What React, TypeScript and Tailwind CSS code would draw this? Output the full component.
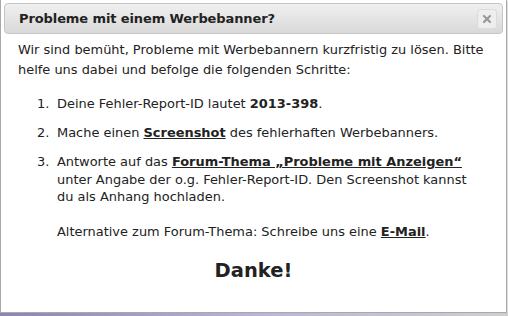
import { X } from 'lucide-react'

const font = { fontFamily: '"DejaVu Sans", Verdana, sans-serif' }

export default function App() {
  return (
    <div className="h-[316px] w-[508px] overflow-hidden bg-white" style={font}>
      <div className="flex h-[313px] w-[507px] flex-col border-b border-l border-r border-[#a9a9a9] bg-white px-[3px] pt-[3px] shadow-[1px_1px_2px_rgba(0,0,0,0.2)]">
        <div className="flex h-[31px] items-center justify-between rounded-[4px] border border-[#c5c5c5] bg-gradient-to-b from-[#f0f0f0] to-[#d9d9d9] pl-[14px] pr-[5px]">
          <span className="text-[13px] font-bold tracking-[-0.1px] text-[#222]">
            Probleme mit einem Werbebanner?
          </span>
          <button className="flex h-[20px] w-[20px] items-center justify-center rounded-[3px] border border-[#dcdcdc] bg-[#eeeeee]">
            <X size={12} strokeWidth={4.5} className="text-[#9a9a9a]" />
          </button>
        </div>

        <div className="whitespace-nowrap px-[14px] pt-[6px] text-[12.95px] text-[#222]">
          <p className="leading-[20px]">
            Wir sind bemüht, Probleme mit Werbebannern kurzfristig zu lösen. Bitte
            <br />
            helfe uns dabei und befolge die folgenden Schritte:
          </p>

          <ol className="mt-[15px] flex flex-col gap-[11px] pl-[19px]">
            <li className="flex leading-[18px]">
              <span className="w-[20px] shrink-0">1.</span>
              <span>
                Deine Fehler-Report-ID lautet <b>2013-398</b>.
              </span>
            </li>
            <li className="flex leading-[18px]">
              <span className="w-[20px] shrink-0">2.</span>
              <span>
                Mache einen <a className="font-bold underline">Screenshot</a> des
                fehlerhaften Werbebanners.
              </span>
            </li>
            <li className="flex leading-[17.5px]">
              <span className="w-[20px] shrink-0">3.</span>
              <div>
                <p>
                  Antworte auf das{' '}
                  <a className="font-bold underline">
                    Forum-Thema „Probleme mit Anzeigen“
                  </a>
                  <br />
                  unter Angabe der o.g. Fehler-Report-ID. Den Screenshot kannst
                  <br />
                  du als Anhang hochladen.
                </p>
                <p className="mt-[17px]">
                  Alternative zum Forum-Thema: Schreibe uns eine{' '}
                  <a className="font-bold underline">E-Mail</a>.
                </p>
              </div>
            </li>
          </ol>

          <p className="mt-[16px] text-center text-[19.5px] font-bold text-[#222]">
            Danke!
          </p>
        </div>
      </div>
      <div className="h-[3px] w-[508px] bg-gradient-to-r from-[#8a86b0] via-[#b9b5d6] to-[#cfcfcf]" />
    </div>
  )
}
